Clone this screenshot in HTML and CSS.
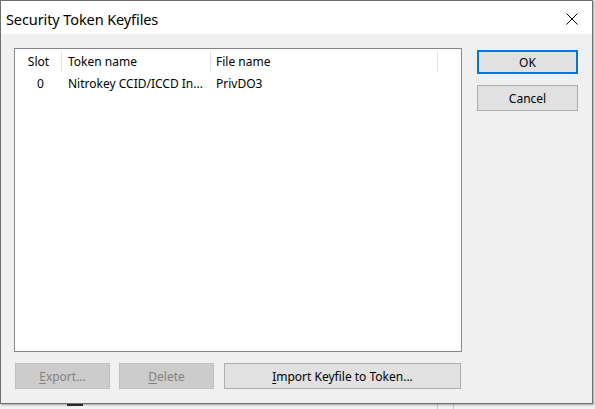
FILE: index.html
```html
<!DOCTYPE html>
<html>
<head>
<meta charset="utf-8">
<link rel="stylesheet" href="styles.css">
</head>
<body>
<div class="desktop">
  <div class="dialog">
    <div class="titlebar">
      <span class="title">Security Token Keyfiles</span>
      <svg class="close" width="12" height="12" viewBox="0 0 12 12"><path d="M0.5 0.5 L11.5 11.5 M11.5 0.5 L0.5 11.5" stroke="#000" stroke-width="1" fill="none"/></svg>
    </div>
    <div class="content">
      <div class="leftcol">
        <div class="listbox">
          <div class="lhead">
            <div class="hc c1"><span>Slot</span></div>
            <div class="hc c2"><span>Token name</span></div>
            <div class="hc c3"><span>File name</span></div>
            <div class="hc c4"></div>
          </div>
          <div class="lrow">
            <div class="rc c1">0</div>
            <div class="rc c2">Nitrokey CCID/ICCD In...</div>
            <div class="rc c3">PrivDO3</div>
          </div>
        </div>
        <div class="bottombtns">
          <button class="btn disabled w-export"><u>E</u>xport...</button>
          <button class="btn disabled w-delete"><u>D</u>elete</button>
          <button class="btn w-import"><u>I</u>mport Keyfile to Token...</button>
        </div>
      </div>
      <div class="rightcol">
        <button class="btn default">OK</button>
        <button class="btn cancel">Cancel</button>
      </div>
    </div>
  </div>
  <div class="bgmark"></div>
</div>
</body>
</html>
```
FILE: styles.css
```css
* { box-sizing: border-box; }
html, body { margin: 0; padding: 0; }
body {
  width: 595px;
  height: 409px;
  overflow: hidden;
  font-family: "Noto Sans", "Open Sans", sans-serif;
  font-size: 12px;
  color: #000;
}
.desktop {
  position: relative;
  width: 595px;
  height: 409px;
  background: #f3f3f3;
  background-image:
    linear-gradient(to right, transparent 437px, #c8c8c8 437px, #c8c8c8 438px, transparent 438px, transparent 453px, #c8c8c8 453px, #c8c8c8 454px, transparent 454px);
}
.dialog {
  width: 593px;
  height: 404px;
  border: 1px solid #6f6f6f;
  background: #f0f0f0;
  display: flex;
  flex-direction: column;
  box-shadow: 1px 1px 2px rgba(0,0,0,0.35);
  position: relative;
  z-index: 1;
}
.titlebar {
  height: 33px;
  background: #fff;
  display: flex;
  align-items: center;
  justify-content: space-between;
  padding: 0 14px 0 5px;
  flex: none;
}
.title {
  font-size: 14.5px;
  letter-spacing: -0.1px;
  padding-top: 2px;
}
.close { display: block; margin-top: 2px; }
.content {
  flex: 1;
  display: flex;
  padding: 14px 0 0 13px;
}
.leftcol {
  width: 448px;
  display: flex;
  flex-direction: column;
}
.listbox {
  width: 448px;
  height: 304px;
  background: #fff;
  border: 1px solid #828790;
  padding-top: 2px;
}
.lhead, .lrow {
  display: grid;
  grid-template-columns: 47px 149px 227px 1fr;
}
.hc {
  height: 22px;
  display: flex;
  align-items: center;
  border-right: 1px solid #e5e5e5;
  padding-bottom: 1px;
}
.hc.c4 { border-right: none; }
.hc.c1 { justify-content: center; padding-left: 1px; }
.hc.c2 { padding-left: 6px; }
.hc.c3 { padding-left: 5px; }
.lrow { margin-top: 3px; line-height: 16px; }
.rc { white-space: nowrap; overflow: hidden; }
.rc.c1 { text-align: center; padding-left: 4px; }
.rc.c2 { padding-left: 6px; }
.rc.c3 { padding-left: 5px; }
.bottombtns {
  display: flex;
  margin-top: 11px;
  padding-left: 1px;
}
.btn {
  font-family: inherit;
  font-size: 12px;
  height: 26px;
  background: #e1e1e1;
  border: 1px solid #adadad;
  color: #000;
  padding: 0;
  margin: 0;
  display: flex;
  align-items: center;
  justify-content: center;
}
.btn u { text-underline-offset: 2px; }
.btn.disabled {
  background: #cccccc;
  border-color: #bfbfbf;
  color: #838383;
}
.w-export { width: 95px; }
.w-delete { width: 95px; margin-left: 9px; }
.w-import { width: 237px; margin-left: 10px; }
.rightcol {
  margin-left: 15px;
  width: 101px;
  padding-top: 2px;
  display: flex;
  flex-direction: column;
}
.btn.default {
  width: 101px;
  height: 24px;
  border: 2px solid #0078d7;
}
.btn.cancel {
  width: 101px;
  height: 26px;
  margin-top: 11px;
}
.bgmark {
  position: absolute;
  left: 67px;
  top: 404px;
  width: 16px;
  height: 2px;
  background: #333;
}
```
